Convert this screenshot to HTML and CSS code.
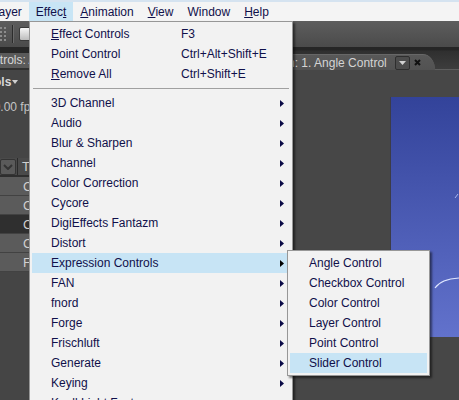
FILE: index.html
```html
<!DOCTYPE html>
<html>
<head>
<meta charset="utf-8">
<title>After Effects - Effect menu</title>
<link rel="stylesheet" href="styles.css">
</head>
<body>
<div class="window">
  <div class="menubar">
    <span class="mb-item"><u>F</u>ile</span>
    <span class="mb-item"><u>E</u>dit</span>
    <span class="mb-item"><u>C</u>omposition</span>
    <span class="mb-item"><u>L</u>ayer</span>
    <span class="mb-item active">Effec<u>t</u></span>
    <span class="mb-item"><u>A</u>nimation</span>
    <span class="mb-item"><u>V</u>iew</span>
    <span class="mb-item">Window</span>
    <span class="mb-item"><u>H</u>elp</span>
  </div>

  <div class="toolbar">
    <svg class="tool-grid" width="12" height="14" viewBox="0 0 12 14">
      <rect x="0" y="0" width="2" height="2" fill="#8c8c8c"/><rect x="4" y="0" width="2" height="2" fill="#8c8c8c"/><rect x="8" y="0" width="2" height="2" fill="#8c8c8c"/>
      <rect x="0" y="4" width="2" height="2" fill="#8c8c8c"/><rect x="4" y="4" width="2" height="2" fill="#8c8c8c"/><rect x="8" y="4" width="2" height="2" fill="#8c8c8c"/>
      <rect x="0" y="8" width="2" height="2" fill="#8c8c8c"/><rect x="4" y="8" width="2" height="2" fill="#8c8c8c"/><rect x="8" y="8" width="2" height="2" fill="#8c8c8c"/>
      <rect x="0" y="12" width="2" height="2" fill="#8c8c8c"/><rect x="4" y="12" width="2" height="2" fill="#8c8c8c"/><rect x="8" y="12" width="2" height="2" fill="#8c8c8c"/>
    </svg>
    <span class="tool-sep"></span>
    <span class="tool-rect"></span>
  </div>

  <div class="panels">
    <section class="panel-left">
      <div class="lp-top"></div>
      <div class="lp-tab">Effect Controls: Angle Control</div>
      <div class="lp-title">Controls<svg class="caret" width="6" height="4" viewBox="0 0 6 4"><path d="M0 0H6L3 4Z" fill="#cfcfcf"/></svg></div>
      <div class="lp-fps">30.00 fps</div>
      <div class="tl-header">
        <span class="tl-drop"><svg width="10" height="6" viewBox="0 0 10 6"><path d="M1 1L5 5L9 1" stroke="#333" stroke-width="2" fill="none"/></svg></span>
        <span class="tl-div"></span>
        <span class="tl-col">Type</span>
      </div>
      <div class="tl-row">Comp 1</div>
      <div class="tl-row">Comp 2</div>
      <div class="tl-row selected">Comp 3</div>
      <div class="tl-row">Comp 4</div>
      <div class="tl-row">Footage</div>
    </section>

    <section class="panel-right">
      <div class="rp-tabbar">
        <div class="rp-tab">
          <span class="rp-title">Composition: 1. Angle Control</span>
          <span class="tab-drop"><svg width="7" height="4" viewBox="0 0 7 4"><path d="M0 0H7L3.5 4Z" fill="#d2d2d2"/></svg></span>
          <svg class="tab-close" width="7" height="7" viewBox="0 0 7 7"><path d="M1 1L6 6M6 1L1 6" stroke="#111" stroke-width="2"/></svg>
        </div>
      </div>
      <div class="viewer">
        <div class="comp">
          <svg class="comp-art" width="120" height="240" viewBox="0 0 120 240">
            <path d="M44 191 Q50 182 68 181" stroke="#dfe6ff" stroke-width="1.2" fill="none"/>
            <path d="M64 101 L67 97" stroke="#a9b6f0" stroke-width="1" fill="none"/>
          </svg>
        </div>
      </div>
    </section>
  </div>

  <div class="menu main-menu">
    <div class="mi"><span><u>E</u>ffect Controls</span><span>F3</span></div>
    <div class="mi"><span>Point Control</span><span>Ctrl+Alt+Shift+E</span></div>
    <div class="mi"><span><u>R</u>emove All</span><span>Ctrl+Shift+E</span></div>
    <div class="sep"></div>
    <div class="mi"><span>3D Channel</span><span></span><svg class="arr" width="4" height="7" viewBox="0 0 4 7"><path d="M0 0L4 3.5L0 7Z"/></svg></div>
    <div class="mi"><span>Audio</span><span></span><svg class="arr" width="4" height="7" viewBox="0 0 4 7"><path d="M0 0L4 3.5L0 7Z"/></svg></div>
    <div class="mi"><span>Blur &amp; Sharpen</span><span></span><svg class="arr" width="4" height="7" viewBox="0 0 4 7"><path d="M0 0L4 3.5L0 7Z"/></svg></div>
    <div class="mi"><span>Channel</span><span></span><svg class="arr" width="4" height="7" viewBox="0 0 4 7"><path d="M0 0L4 3.5L0 7Z"/></svg></div>
    <div class="mi"><span>Color Correction</span><span></span><svg class="arr" width="4" height="7" viewBox="0 0 4 7"><path d="M0 0L4 3.5L0 7Z"/></svg></div>
    <div class="mi"><span>Cycore</span><span></span><svg class="arr" width="4" height="7" viewBox="0 0 4 7"><path d="M0 0L4 3.5L0 7Z"/></svg></div>
    <div class="mi"><span>DigiEffects Fantazm</span><span></span><svg class="arr" width="4" height="7" viewBox="0 0 4 7"><path d="M0 0L4 3.5L0 7Z"/></svg></div>
    <div class="mi"><span>Distort</span><span></span><svg class="arr" width="4" height="7" viewBox="0 0 4 7"><path d="M0 0L4 3.5L0 7Z"/></svg></div>
    <div class="mi active"><span>Expression Controls</span><span></span><svg class="arr" width="4" height="7" viewBox="0 0 4 7"><path d="M0 0L4 3.5L0 7Z"/></svg></div>
    <div class="mi"><span>FAN</span><span></span><svg class="arr" width="4" height="7" viewBox="0 0 4 7"><path d="M0 0L4 3.5L0 7Z"/></svg></div>
    <div class="mi"><span>fnord</span><span></span><svg class="arr" width="4" height="7" viewBox="0 0 4 7"><path d="M0 0L4 3.5L0 7Z"/></svg></div>
    <div class="mi"><span>Forge</span><span></span><svg class="arr" width="4" height="7" viewBox="0 0 4 7"><path d="M0 0L4 3.5L0 7Z"/></svg></div>
    <div class="mi"><span>Frischluft</span><span></span><svg class="arr" width="4" height="7" viewBox="0 0 4 7"><path d="M0 0L4 3.5L0 7Z"/></svg></div>
    <div class="mi"><span>Generate</span><span></span><svg class="arr" width="4" height="7" viewBox="0 0 4 7"><path d="M0 0L4 3.5L0 7Z"/></svg></div>
    <div class="mi"><span>Keying</span><span></span><svg class="arr" width="4" height="7" viewBox="0 0 4 7"><path d="M0 0L4 3.5L0 7Z"/></svg></div>
    <div class="mi"><span>Knoll Light Factory</span><span></span><svg class="arr" width="4" height="7" viewBox="0 0 4 7"><path d="M0 0L4 3.5L0 7Z"/></svg></div>
    <div class="mi"><span>Matte</span><span></span><svg class="arr" width="4" height="7" viewBox="0 0 4 7"><path d="M0 0L4 3.5L0 7Z"/></svg></div>
  </div>

  <div class="menu sub-menu">
    <div class="mi"><span>Angle Control</span></div>
    <div class="mi"><span>Checkbox Control</span></div>
    <div class="mi"><span>Color Control</span></div>
    <div class="mi"><span>Layer Control</span></div>
    <div class="mi"><span>Point Control</span></div>
    <div class="mi active"><span>Slider Control</span></div>
  </div>
</div>
</body>
</html>
```

FILE: styles.css
```css
html, body {
  margin: 0;
  padding: 0;
  overflow: hidden;
}
body {
  background: #464646;
  font-family: "Liberation Sans", Arial, sans-serif;
  font-size: 12px;
}
.window {
  position: relative;
  width: 720px;
  height: 400px;
  margin-left: -164px;
  background: #464646;
  overflow: hidden;
}

/* menu bar */
.menubar {
  display: flex;
  height: 19px;
  border-top: 2px solid #d5e3f0;
  background: #f4f4f4;
  color: #10104a;
  white-space: nowrap;
}
.mb-item {
  padding: 1px 7px 0;
  line-height: 18px;
}
.mb-item.active {
  background: #c8e5f5;
}

/* toolbar */
.toolbar {
  display: flex;
  align-items: center;
  gap: 4px;
  height: 26px;
  padding-left: 160px;
  background: linear-gradient(#5d5d5d, #4b4b4b);
}
.tool-sep {
  width: 1px;
  height: 18px;
  background: #2c2c2c;
  border-right: 1px solid #6a6a6a;
}
.tool-rect {
  width: 16px;
  height: 12px;
  margin-left: 1px;
  border: 1px solid #3a3a3a;
  border-radius: 2px;
  background: linear-gradient(#f6f6f6, #bcbcbc);
}

/* panels */
.panels {
  display: flex;
  height: 353px;
  padding-left: 100px;
}
.panel-left {
  width: 289px;
  background: #454545;
  white-space: nowrap;
}
.lp-top {
  height: 6px;
  background: #272727;
}
.lp-tab {
  height: 15px;
  line-height: 15px;
  padding-left: 8px;
  background: #5a5a5a;
  color: #d6d6d6;
  border-bottom: 2px solid #303030;
}
.lp-title {
  padding: 4px 0 0 26px;
  line-height: 16px;
  font-weight: bold;
  color: #d8d8d8;
}
.caret {
  margin-left: 1px;
  vertical-align: 2px;
}
.lp-fps {
  margin-top: 9px;
  padding-left: 51px;
  line-height: 16px;
  color: #c4c4c4;
}
.tl-header {
  display: flex;
  align-items: center;
  margin-top: 43px;
  height: 17px;
  padding-left: 64px;
  background: #4a4a4a;
  border-bottom: 2px solid #2e2e2e;
  font-size: 13px;
  color: #cfcfcf;
}
.tl-drop {
  box-sizing: border-box;
  width: 16px;
  height: 16px;
  display: flex;
  align-items: center;
  justify-content: center;
  border: 1px solid #343434;
  border-radius: 2px;
  background: #5a5a5a;
}
.tl-div {
  width: 1px;
  height: 17px;
  margin-left: 1px;
  background: #2a2a2a;
}
.tl-col {
  padding-left: 4px;
  line-height: 17px;
}
.tl-row {
  height: 18px;
  line-height: 20px;
  padding-left: 87px;
  border-bottom: 1px solid #424242;
  background: #5b5b5b;
  color: #d0d0d0;
  font-size: 13px;
  overflow: hidden;
}
.tl-row.selected {
  background: #2f2f2f;
}

.panel-right {
  flex: 1;
  display: flex;
  flex-direction: column;
  min-width: 0;
}
.rp-tabbar {
  box-sizing: border-box;
  height: 23px;
  display: flex;
  align-items: flex-end;
  border-bottom: 1px solid #5e5e5e;
  background: linear-gradient(#262626 0, #262626 3px, #2f2f2f 4px, #3d3d3d 100%);
}
.rp-tab {
  display: flex;
  align-items: center;
  box-sizing: border-box;
  height: 16px;
  margin-bottom: -1px;
  padding: 0 14px 0 3px;
  background: linear-gradient(#585858, #525252);
  border-top: 1px solid #676767;
  border-top-right-radius: 12px 16px;
  color: #d4d4d4;
  white-space: nowrap;
}
.rp-title {
  line-height: 14px;
}
.tab-drop {
  box-sizing: border-box;
  width: 15px;
  height: 14px;
  margin-left: 8px;
  display: flex;
  align-items: center;
  justify-content: center;
  border: 1px solid #2e2e2e;
  border-radius: 2px;
  background: #4c4c4c;
}
.tab-close {
  margin-left: 4px;
}
.viewer {
  flex: 1;
  padding-top: 27px;
  background: #474747;
}
.comp {
  position: relative;
  width: 120px;
  height: 240px;
  margin-left: 166px;
  background: linear-gradient(#33439a, #6272cc);
  box-shadow: -1px 0 0 #3c3c48;
}
.comp-art {
  display: block;
}

/* drop-down menus */
.menu {
  position: absolute;
  box-sizing: border-box;
  padding: 2px;
  border: 1px solid #979797;
  background: #f2f2f2;
  color: #10104a;
  box-shadow: 2px 2px 2px rgba(0, 0, 0, 0.5);
  white-space: nowrap;
}
.main-menu {
  left: 193px;
  top: 21px;
  width: 264px;
}
.sub-menu {
  left: 451px;
  top: 250px;
  width: 143px;
}
.mi {
  display: grid;
  grid-template-columns: 130px 1fr 4px;
  align-items: center;
  height: 20px;
  line-height: 20px;
  padding: 0 6px 0 19px;
}
.sub-menu .mi {
  grid-template-columns: 1fr;
}
.mi.active {
  background: #c7e4f5;
}
.mi.active .arr {
  fill: #000;
}
.arr {
  display: block;
  fill: #0a0a46;
}
.sep {
  height: 9px;
  box-sizing: border-box;
  padding: 4px 1px 0;
}
.sep::after {
  content: "";
  display: block;
  height: 1px;
  background: #a0a0a0;
}
```
